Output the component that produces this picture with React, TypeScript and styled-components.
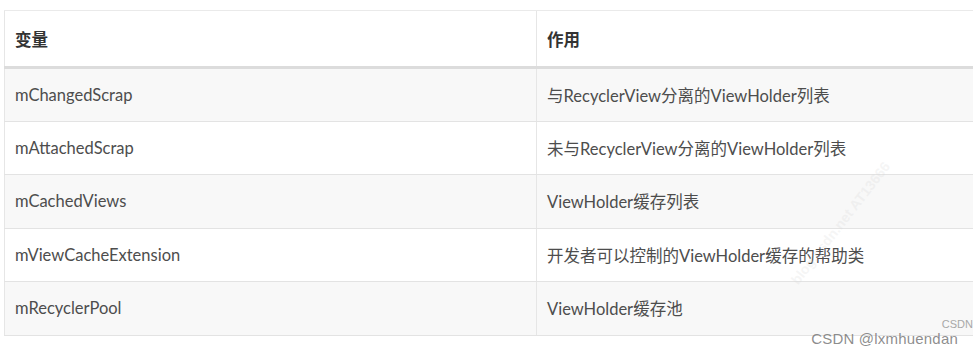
import styled, { createGlobalStyle } from 'styled-components';

const GlobalStyle = createGlobalStyle`
  html, body {
    margin: 0;
    padding: 0;
    background: #fff;
    overflow: hidden;
  }
`;

const rows: [string, string][] = [
  ['mChangedScrap', '与RecyclerView分离的ViewHolder列表'],
  ['mAttachedScrap', '未与RecyclerView分离的ViewHolder列表'],
  ['mCachedViews', 'ViewHolder缓存列表'],
  ['mViewCacheExtension', '开发者可以控制的ViewHolder缓存的帮助类'],
  ['mRecyclerPool', 'ViewHolder缓存池'],
];

const Page = styled.div`
  position: relative;
  width: 973px;
  height: 354px;
  padding: 10px 0 0 4px;
  box-sizing: border-box;
  overflow: hidden;
`;

const Table = styled.table`
  width: 1010px;
  border-collapse: collapse;
  table-layout: fixed;
  font-family: Lato, 'Noto Sans CJK SC', sans-serif;
  font-size: 16.5px;
  color: #4d4d4d;
`;

const HeadCell = styled.th`
  height: 57px;
  padding: 0 10px;
  text-align: left;
  font-weight: 700;
  color: #333;
  background: #fff;
  border-top: 1px solid #eaeaea;
  border-left: 1px solid #e6e6e6;
  border-bottom: 3px solid #dcdcdc;
  box-sizing: border-box;
  &:first-child {
    width: 532px;
  }
`;

const Row = styled.tr<{ $striped: boolean }>`
  background: ${({ $striped }) => ($striped ? '#f8f8f8' : '#fff')};
`;

const Cell = styled.td`
  height: 53.5px;
  padding: 0 10px;
  border-left: 1px solid #e6e6e6;
  border-bottom: 1px solid #e3e3e3;
  box-sizing: border-box;
  white-space: nowrap;
`;

const Watermark = styled.div`
  position: absolute;
  right: 15px;
  bottom: 7px;
  font-family: 'Liberation Sans', Arial, sans-serif;
  font-size: 15px;
  letter-spacing: 0.2px;
  color: rgba(120, 120, 120, 0.85);
`;

const SmallMark = styled.div`
  position: absolute;
  right: 0;
  top: 318px;
  font-family: 'Liberation Sans', Arial, sans-serif;
  font-size: 11px;
  color: #a8a8a8;
`;

const FaintMark = styled.div`
  position: absolute;
  left: 765px;
  top: 215px;
  transform: rotate(-52deg);
  font-family: 'Liberation Sans', Arial, sans-serif;
  font-size: 14px;
  font-weight: 700;
  color: rgba(215, 215, 215, 0.25);
  white-space: nowrap;
`;

export default function App() {
  return (
    <>
      <GlobalStyle />
      <Page>
        <Table>
          <thead>
            <tr>
              <HeadCell>变量</HeadCell>
              <HeadCell>作用</HeadCell>
            </tr>
          </thead>
          <tbody>
            {rows.map(([name, desc], i) => (
              <Row key={name} $striped={i % 2 === 0}>
                <Cell>{name}</Cell>
                <Cell>{desc}</Cell>
              </Row>
            ))}
          </tbody>
        </Table>
        <FaintMark>blog.csdn.net AT13666</FaintMark>
        <SmallMark>CSDN</SmallMark>
        <Watermark>CSDN @lxmhuendan</Watermark>
      </Page>
    </>
  );
}
